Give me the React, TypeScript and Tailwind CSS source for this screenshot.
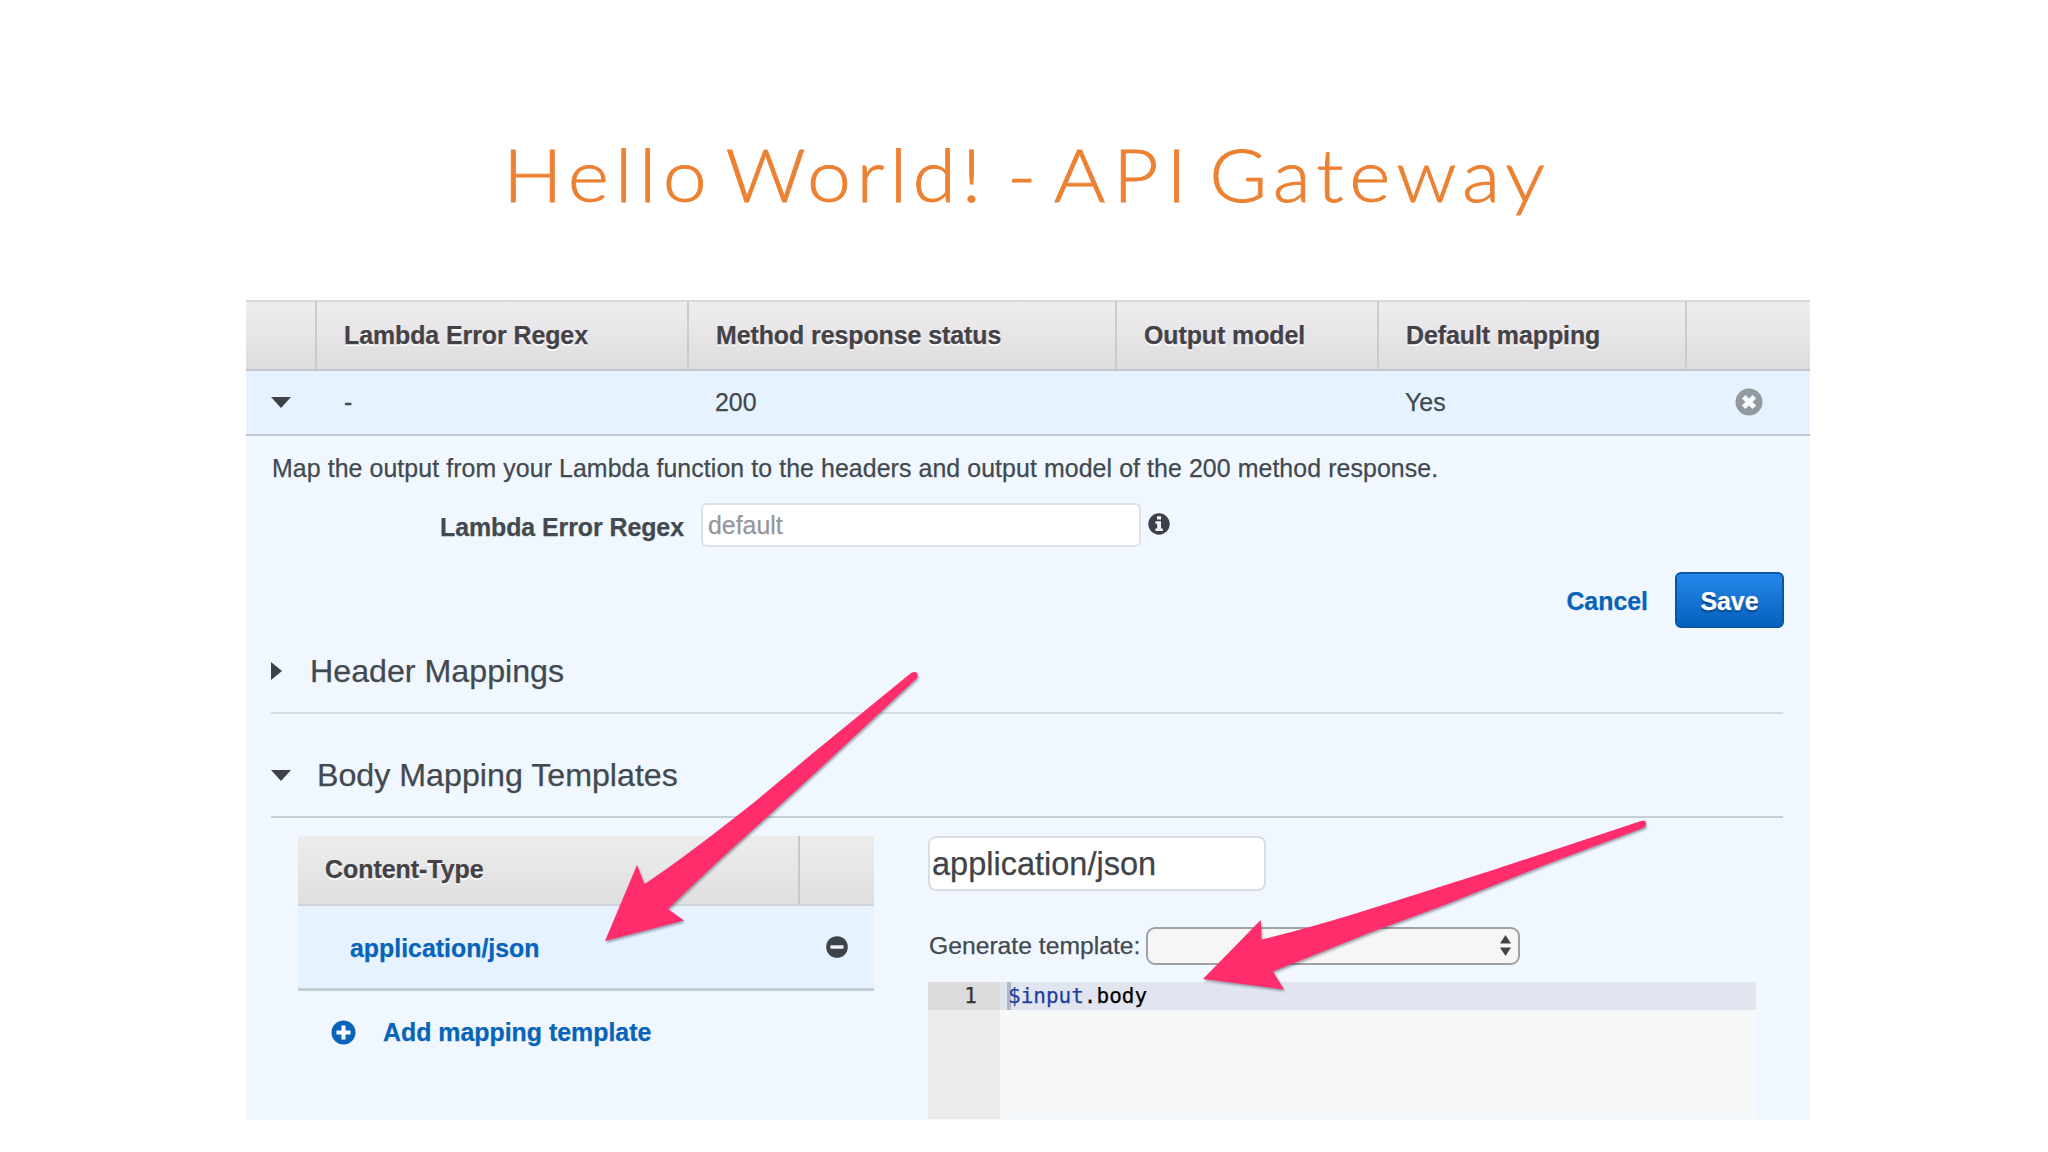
import type { ReactNode } from "react"

const columns = [
  { label: "", width: "w-[71px]" },
  { label: "Lambda Error Regex", width: "w-[372px]" },
  { label: "Method response status", width: "w-[428px]" },
  { label: "Output model", width: "w-[262px]" },
  { label: "Default mapping", width: "w-[308px]" },
]

export default function App() {
  return (
    <main className="relative h-[1152px] w-[2048px] overflow-hidden bg-white font-['Liberation_Sans',Arial,sans-serif] text-[24.9px] text-[#42494f] [-webkit-text-stroke:0.25px]">
      <h1 className="h-[300px] pt-[129px] pl-[503px] font-['Lato',sans-serif] text-[73px] leading-[90px] font-light text-[#ec8133] [-webkit-text-stroke:0.8px]">
        <span className="flex origin-left scale-x-[1.08] whitespace-nowrap">
          <span className="w-[206px] tracking-[5.9px]">Hello</span>
          <span className="w-[261px] tracking-[5px]">World!</span>
          <span className="w-[43px]">-</span>
          <span className="w-[144px] tracking-[7px]">API</span>
          <span className="tracking-[5.5px]">Gateway</span>
        </span>
      </h1>

      <section className="ml-[246px] h-[820px] w-[1564px] bg-[#f0f7ff] whitespace-nowrap">
        {/* Response table */}
        <div className="flex h-[71px] border-t-2 border-b-2 border-t-[#d9d8da] border-b-[#c6c5c7] bg-linear-to-b from-[#efedf0] to-[#dfdcdf]">
          {columns.map((c) => (
            <div
              key={c.label}
              className={`${c.width} flex shrink-0 items-center border-r-2 border-[#cbcacc] pt-px pl-[27px] font-bold tracking-[-0.05px] text-[#444246] [text-shadow:0_2px_0_#fff]`}
            >
              {c.label}
            </div>
          ))}
        </div>
        <div className="flex h-[65px] items-center border-b-2 border-[#bfc7d5] bg-[#e6f2ff]">
          <span className="flex w-[98px] pl-[25px]">
            <CaretDown />
          </span>
          <span className="w-[371px]">-</span>
          <span className="w-[690px]">200</span>
          <span className="w-[330px]">Yes</span>
          <svg className="mb-0.5 size-[28px]" viewBox="0 0 28 28">
            <circle cx="14" cy="14" r="13.5" fill="#939a9f" />
            <path d="M8.7 8.7l10.6 10.6M19.3 8.7l-10.6 10.6" stroke="#f5faff" strokeWidth="5" />
          </svg>
        </div>

        {/* Mapping form */}
        <p className="h-[67px] pl-[26px] leading-[64px] tracking-[0.08px]">
          Map the output from your Lambda function to the headers and output model of the 200 method response.
        </p>
        <div className="flex h-11 items-center">
          <label className="w-[455px] pt-1.5 pl-[194px] font-bold tracking-[-0.05px]">Lambda Error Regex</label>
          <input
            className="h-11 w-[440px] rounded-md border-2 border-[#dbe0ea] bg-white px-[5px] pt-px placeholder:text-[#94979b]"
            placeholder="default"
          />
          <svg className="mb-[3px] ml-[7px] size-[22px]" viewBox="0 0 22 22">
            <circle cx="11" cy="11" r="10.7" fill="#3c4247" />
            <path d="M9 3.2h4v3.4H9zM7.4 8.3H13v7.2h1.8v2.4H7.4v-2.4h1.8v-4.8H7.4z" fill="#f0f6ff" />
          </svg>
        </div>
        <div className="mt-[25px] flex h-14 items-center justify-end pr-[26px] font-bold">
          <button className="mr-[27px] pt-1 text-[#0764b8]">Cancel</button>
          <button className="h-14 w-[109px] rounded-md border-2 border-[#0756a8] bg-linear-to-b from-[#2588ea] to-[#0560bd] pt-1 text-white [text-shadow:0_2px_2px_#063a78]">
            Save
          </button>
        </div>

        <SectionTitle className="h-[86px] border-[#d6dce6] pt-0.5">
          <span className="w-[39px]">
            <svg className="h-[18px] w-[11px]" viewBox="0 0 11 18">
              <path d="M0 0l11 9L0 18z" fill="#3c4247" />
            </svg>
          </span>
          Header Mappings
        </SectionTitle>
        <SectionTitle className="h-[104px] border-[#c5cdd6] pt-5">
          <span className="w-[46px]">
            <CaretDown />
          </span>
          Body Mapping Templates
        </SectionTitle>

        <div className="flex pt-[18px] pl-[52px]">
          <div className="w-[576px]">
            <div className="flex h-[70px] items-center border-b-2 border-[#cfd3d7] bg-linear-to-b from-[#ededed] to-[#dfdfdf] font-bold text-[#444246]">
              <span className="flex h-full w-[502px] items-center border-r-2 border-[#c8c9ca] pl-[27px] [text-shadow:0_2px_0_#fff]">
                Content-Type
              </span>
            </div>
            <div className="flex h-[85px] items-center border-b-[3px] border-[#c3ced6] bg-[#e6f2ff] pl-[52px]">
              <a className="w-[476px] pt-1 font-bold text-[#0764b8]">application/json</a>
              <svg className="size-[22px]" viewBox="0 0 22 22">
                <circle cx="11" cy="11" r="10.8" fill="#3c4247" />
                <path d="M4.5 11h13" stroke="#eef5ff" strokeWidth="3.4" />
              </svg>
            </div>
            <div className="flex h-[83px] items-center pl-[33px] font-bold text-[#0764b8]">
              <svg className="mr-[15px] size-[25px]" viewBox="0 0 25 25">
                <circle cx="12.5" cy="12.5" r="12" fill="#0764b8" />
                <path d="M5.5 12.5h14M12.5 5.5v14" stroke="#fff" strokeWidth="4" />
              </svg>
              <span className="ml-3 pt-px">Add mapping template</span>
            </div>
          </div>

          <div className="ml-[54px] w-[828px]">
            <input
              className="block h-[55px] w-[338px] rounded-lg border-2 border-[#d9dee6] bg-white pt-px pl-0.5 text-[32.5px] text-[#404448]"
              defaultValue="application/json"
            />
            <div className="mt-9 flex h-[37px] items-center">
              <span className="w-[218px] pl-px text-[24.7px]">Generate template:</span>
              <div className="flex h-[38px] w-[374px] items-center justify-end rounded-[9px] border-2 border-[#9fa2a5] bg-[#f6f6f6] pr-[7px]">
                <svg className="h-[21px] w-[11px]" viewBox="0 0 11 21">
                  <path d="M5.5 0L11 8.6H0zM5.5 21L0 12.4h11z" fill="#444" />
                </svg>
              </div>
            </div>
            <div className="mt-[18px] flex h-[137px] bg-[#f7f8fa] font-['DejaVu_Sans_Mono',monospace] text-[21px] leading-[28px]">
              <div className="w-[72px] bg-[#ebebeb]">
                <div className="h-[28px] bg-[#dcdcdc] pr-[23px] text-right text-[#333]">1</div>
              </div>
              <div className="h-[28px] flex-1 bg-[#e1e5ef] pl-[7px] text-black">
                <div className="h-full border-l-4 border-[#b4b8c1]">
                  <span className="-ml-[3px] text-[#1f3f9f]">$input</span>.body
                </div>
              </div>
            </div>
          </div>
        </div>
      </section>

      {/* Callout arrows */}
      <svg
        className="pointer-events-none absolute inset-0 h-full w-full drop-shadow-[1px_2px_1px_rgba(40,40,60,0.4)]"
        viewBox="0 0 2048 1152"
        fill="#ff2d6c"
      >
        <path d="M605 941L637 865L644.5 884Q684 858 757 800L813 753L911 673Q915 671 917 673Q919 676 916 679L813 775L767 817L727 853Q699 879 668 909L684 920.5Z" />
        <path d="M1203 979L1260.7 920L1261.5 939.5Q1314 927 1382.6 905L1493 870L1641 821Q1646 819.5 1646 823Q1646 827 1643 828L1555 861L1444.6 905L1369 933L1273 971.5L1284 989.5Z" />
      </svg>
    </main>
  )
}

function CaretDown() {
  return (
    <svg className="h-[11px] w-[20px]" viewBox="0 0 20 11">
      <path d="M0 0h20L10 11z" fill="#3c4247" />
    </svg>
  )
}

function SectionTitle({ className, children }: { className: string; children: ReactNode }) {
  return (
    <div className={`${className} mr-[27px] ml-[25px] flex items-center border-b-2 text-[32.2px] [&>span]:flex [&>span]:shrink-0 [&>span]:items-center`}>
      {children}
    </div>
  )
}
